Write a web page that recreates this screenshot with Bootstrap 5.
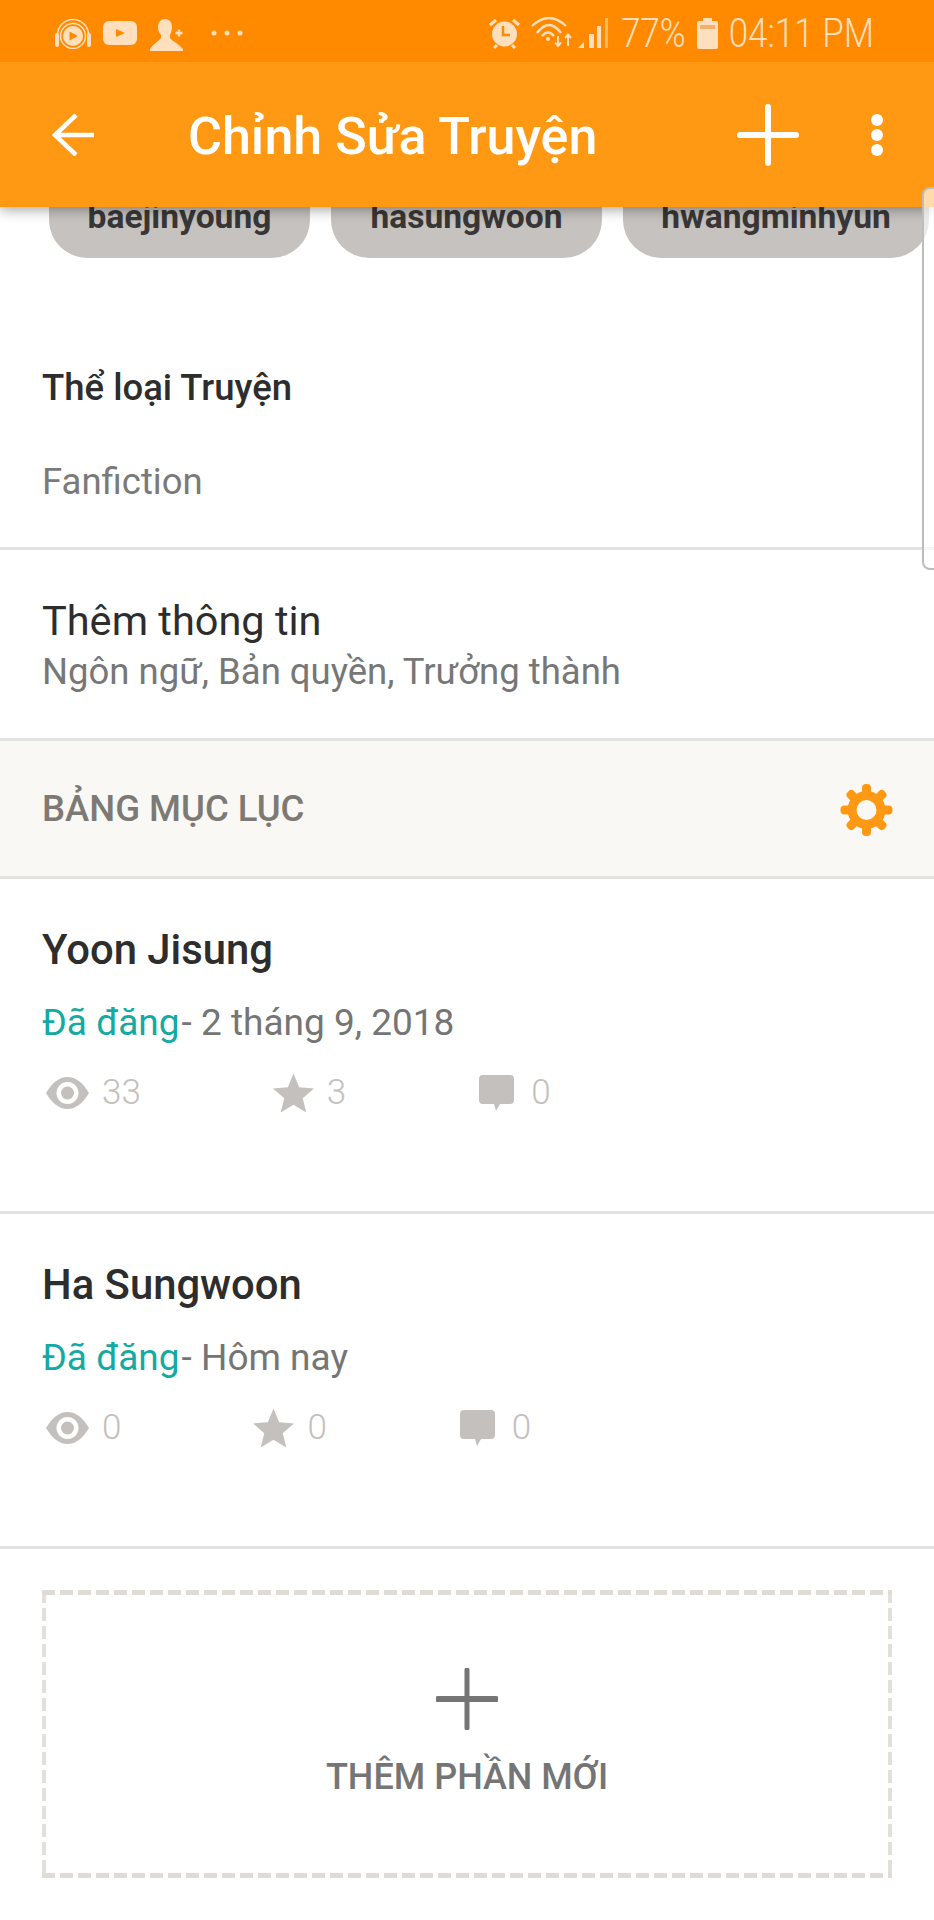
<!DOCTYPE html>
<html lang="vi">
<head>
    <meta charset="UTF-8">
    <meta name="viewport" content="width=device-width, initial-scale=1.0">
    <link href="https://cdn.jsdelivr.net/npm/bootstrap@5.3.2/dist/css/bootstrap.min.css" rel="stylesheet">
    <title>Chỉnh Sửa Truyện</title>
    <style>
        body { font-family: Roboto, "Liberation Sans", sans-serif; color: #222; background: #fff; }
        .phone { width: 934px; height: 1920px; overflow: hidden; position: relative; }
        .top-wrap { position: relative; z-index: 2; box-shadow: 0 3px 12px rgba(0,0,0,.35); }
        .status-bar { height: 62px; background: #ff8a00; color: #ffdfbd; padding: 4px 60px 0 55px; }
        .status-text { font-size: 35px; font-weight: 300; line-height: 1; transform: scaleY(1.15); }
        .gap-yt { margin-left: 12px; }
        .gap-person { margin-left: 13px; margin-top: 4px; }
        .gap-dots { margin-left: 27px; }
        .gap-wifi { margin-left: 11px; }
        .gap-signal { margin-left: 2px; }
        .gap-pct { margin-left: 13px; }
        .gap-batt { margin-left: 11px; }
        .app-bar { height: 145px; background: #ff9812; color: #fff; padding: 0 51px 0 52px; }
        .app-title { font-size: 52px; font-weight: 500; margin: 0 0 0 94px; padding-top: 5px; line-height: 1; }
        .gap-menu { margin-left: 72px; }
        .tag-row { margin-top: -40px; padding-left: 49px; gap: 21px; height: 91px; overflow: hidden; }
        .tag-pill { background: #c6c2bf; color: #383636; font-size: 33.600px; font-weight: 700; border-radius: 38px; height: 91px; line-height: 100px; text-align: center; flex: none; }
        .tag-a { width: 261px; }
        .tag-b { width: 271px; }
        .tag-c { width: 306px; }
        .genre-block { height: 292px; padding: 111px 42px 0; border-bottom: 3px solid #e3e3e1; }
        .genre-title { font-size: 36.500px; font-weight: 500; line-height: 38px; color: #2d2d2d; }
        .genre-value { font-size: 36.500px; line-height: 40px; color: #7a7a7a; margin-top: 55px; }
        .more-block { height: 191px; padding: 48px 42px 0; border-bottom: 3px solid #e3e3e1; }
        .more-title { font-size: 41.500px; line-height: 46px; color: #2d2d2d; }
        .more-sub { font-size: 36.500px; line-height: 40px; color: #777; margin-top: 8px; }
        .toc-head { height: 138px; background: #f9f8f4; border-bottom: 3px solid #e3e3e1; padding: 2px 41px 0 42px; }
        .toc-label { font-size: 36.500px; font-weight: 500; color: #7d7a75; }
        .part-row { height: 335px; padding: 47px 42px 0; border-bottom: 3px solid #e3e3e1; }
        .part-title { font-size: 41.800px; font-weight: 500; line-height: 48px; color: #2d2d2d; }
        .part-meta { font-size: 37px; line-height: 44px; color: #757575; margin-top: 27px; }
        .part-state { color: #14aaa4; margin-right: 2px; }
        .part-stats { margin-top: 26px; height: 44px; padding-left: 4px; gap: 132px; color: #c4c0bd; font-size: 35px; font-weight: 300; }
        .stat-cell { display: flex; align-items: center; gap: 13px; }
        .stat-talk { gap: 17px; margin-left: 1px; }
        .add-box {
            margin: 41px 42px 0; height: 288px; padding-bottom: 3px; color: #757575;
            background-image:
                repeating-linear-gradient(90deg, #dfdbd5 0 13px, transparent 13px 18px),
                repeating-linear-gradient(90deg, #dfdbd5 0 13px, transparent 13px 18px),
                repeating-linear-gradient(180deg, #e3e0da 0 13px, transparent 13px 18px),
                repeating-linear-gradient(180deg, #e3e0da 0 13px, transparent 13px 18px);
            background-size: 100% 5px, 100% 5px, 4px 100%, 4px 100%;
            background-position: 0 0, 0 100%, 0 0, 100% 0;
            background-repeat: no-repeat;
        }
        .add-label { font-size: 36px; font-weight: 500; margin-top: 27px; line-height: 40px; }
        .edge-handle { position: absolute; right: -8px; top: 187px; width: 20px; height: 383px; border: 2px solid #bdbdbd; border-radius: 8px; background: rgba(255,255,255,.65); z-index: 3; }
    </style>
</head>
<body>
<div class="phone">
    <div class="top-wrap">
        <div class="status-bar d-flex align-items-center justify-content-between">
            <div class="d-flex align-items-center">
                <svg width="36" height="31" viewBox="0 0 36 31" fill="none"><path d="M2.500 20V17a15.500 15.500 0 0 1 31 0v3" stroke="#ffdfbd" stroke-width="1.600"/><rect x="0" y="15" width="4" height="14" rx="2" fill="#ffdfbd"/><rect x="32" y="15" width="4" height="14" rx="2" fill="#ffdfbd"/><circle cx="18" cy="18" r="12.500" stroke="#ffdfbd" stroke-width="1.500"/><circle cx="18" cy="18" r="10" fill="#ffdfbd"/><path d="M14.500 13.500l8.500 4.500-8.500 4.500z" fill="#ff8a00"/></svg>
                <svg class="gap-yt" width="34" height="24" viewBox="0 0 34 24"><rect width="34" height="24" rx="6" fill="#ffdfbd"/><path d="M13 8l9 4-9 4z" fill="#ff8a00"/></svg>
                <svg class="gap-person" width="34" height="32" viewBox="0 0 34 32" fill="#ffdfbd"><path d="M15 0c4 0 7 3 7 8 0 3-1 6-2 8v3c2 3 8 5 13 11v2H0v-2c4-6 9-8 11-11v-3c-2-2-3-5-3-8 0-5 3-8 7-8z"/><path d="M25.500 14h7M29 10.500v7" stroke="#ffdfbd" stroke-width="2.500"/></svg>
                <svg class="gap-dots" width="32" height="6" viewBox="0 0 32 6"><circle cx="3" cy="3" r="2.500" fill="#ffdfbd"/><circle cx="16" cy="3" r="2.500" fill="#ffdfbd"/><circle cx="29" cy="3" r="2.500" fill="#ffdfbd"/></svg>
            </div>
            <div class="d-flex align-items-center">
                <svg width="31" height="31" viewBox="0 0 31 31"><circle cx="15.500" cy="16" r="12.500" fill="#ffdfbd"/><path d="M14 8v9h7" stroke="#ff8a00" stroke-width="2.500" fill="none"/><path d="M1 7l6-5M30 7l-6-5M5 30l3-3M26 30l-3-3" stroke="#ffdfbd" stroke-width="3"/></svg>
                <svg class="gap-wifi" width="45" height="32" viewBox="0 0 45 32" fill="none" stroke="#ffdfbd" stroke-width="2.400"><path d="M1 9Q18-7 35 9M6 16Q18 0 30 16M11 19Q17 12 23 19"/><circle cx="17" cy="22" r="2" fill="#ffdfbd" stroke="none"/><path d="M27 19v10M24 25.500l3 3.500 3-3.500M37 29V18M34 21l3-3.500 3 3.500" stroke-width="2"/></svg>
                <svg class="gap-signal" width="30" height="32" viewBox="0 0 30 32" fill="#ffdfbd"><path d="M0 31l6-6v6z"/><rect x="11" y="17" width="5" height="14"/><rect x="19" y="9" width="4" height="22"/><rect x="27" y="1" width="3" height="30" opacity=".55"/></svg>
                <span class="status-text gap-pct">77%</span>
                <svg class="gap-batt" width="21" height="31" viewBox="0 0 21 31"><path d="M6 0h9v3h4a2 2 0 0 1 2 2v24a2 2 0 0 1-2 2H2a2 2 0 0 1-2-2V5a2 2 0 0 1 2-2h4z" fill="#ffdfbd"/><rect x="3" y="7" width="15" height="4" fill="#f0b070"/></svg>
                <span class="status-text gap-batt">04:11 PM</span>
            </div>
        </div>
        <div class="app-bar d-flex align-items-center">
            <svg width="42" height="42" viewBox="0 0 42 42" fill="none" stroke="#fff" stroke-width="4.500"><path d="M42 21H3M24 1L3 21l21 20"/></svg>
            <h1 class="app-title">Chỉnh Sửa Truyện</h1>
            <svg class="ms-auto" width="62" height="62" viewBox="0 0 62 62" stroke="#fff" stroke-width="6" stroke-linecap="round"><path d="M31 3v56M3 31h56"/></svg>
            <svg class="gap-menu" width="12" height="42" viewBox="0 0 12 42" fill="#fff"><circle cx="6" cy="6" r="6"/><circle cx="6" cy="21" r="6"/><circle cx="6" cy="36" r="6"/></svg>
        </div>
    </div>

    <div class="edge-handle"></div>

    <div class="tag-row d-flex">
        <div class="tag-pill tag-a">baejinyoung</div>
        <div class="tag-pill tag-b">hasungwoon</div>
        <div class="tag-pill tag-c">hwangminhyun</div>
    </div>

    <div class="genre-block">
        <div class="genre-title">Thể loại Truyện</div>
        <div class="genre-value">Fanfiction</div>
    </div>

    <div class="more-block">
        <div class="more-title">Thêm thông tin</div>
        <div class="more-sub">Ngôn ngữ, Bản quyền, Trưởng thành</div>
    </div>

    <div class="toc-head d-flex align-items-center justify-content-between">
        <span class="toc-label">BẢNG MỤC LỤC</span>
        <svg width="53" height="52" viewBox="0 0 53 52"><g fill="#ff9812"><circle cx="26.500" cy="26" r="19"/><rect x="22" y="0" width="9" height="52" rx="4"/><rect x="22" y="0" width="9" height="52" rx="4" transform="rotate(45 26.500 26)"/><rect x="22" y="0" width="9" height="52" rx="4" transform="rotate(90 26.500 26)"/><rect x="22" y="0" width="9" height="52" rx="4" transform="rotate(135 26.500 26)"/></g><circle cx="26.500" cy="26" r="10" fill="#f9f8f4"/></svg>
    </div>

    <div class="part-row">
        <div class="part-title">Yoon Jisung</div>
        <div class="part-meta"><span class="part-state">Đã đăng</span>- 2 tháng 9, 2018</div>
        <div class="part-stats d-flex">
            <div class="stat-cell"><svg width="43" height="32" viewBox="0 0 43 32"><path d="M0 16C6 6 13 0 21.500 0S37 6 43 16c-6 10-13 16-21.500 16S6 26 0 16z" fill="#c4c0bd"/><circle cx="21.500" cy="16" r="11" fill="#fff"/><circle cx="21.500" cy="16" r="6.500" fill="#c4c0bd"/></svg><span>33</span></div>
            <div class="stat-cell"><svg width="41" height="40" viewBox="0 0 40 38"><path d="M20 0l5.500 13.500L40 14.500 29 24l3.500 14L20 30.500 7.500 38 11 24 0 14.500l14.500-1z" fill="#c4c0bd"/></svg><span>3</span></div>
            <div class="stat-cell stat-talk"><svg width="35" height="36" viewBox="0 0 35 36"><path d="M4 0h27a4 4 0 0 1 4 4v21a4 4 0 0 1-4 4H21l-4 7-2-7H4a4 4 0 0 1-4-4V4a4 4 0 0 1 4-4z" fill="#c4c0bd"/></svg><span>0</span></div>
        </div>
    </div>

    <div class="part-row">
        <div class="part-title">Ha Sungwoon</div>
        <div class="part-meta"><span class="part-state">Đã đăng</span>- Hôm nay</div>
        <div class="part-stats d-flex">
            <div class="stat-cell"><svg width="43" height="32" viewBox="0 0 43 32"><path d="M0 16C6 6 13 0 21.500 0S37 6 43 16c-6 10-13 16-21.500 16S6 26 0 16z" fill="#c4c0bd"/><circle cx="21.500" cy="16" r="11" fill="#fff"/><circle cx="21.500" cy="16" r="6.500" fill="#c4c0bd"/></svg><span>0</span></div>
            <div class="stat-cell"><svg width="41" height="40" viewBox="0 0 40 38"><path d="M20 0l5.500 13.500L40 14.500 29 24l3.500 14L20 30.500 7.500 38 11 24 0 14.500l14.500-1z" fill="#c4c0bd"/></svg><span>0</span></div>
            <div class="stat-cell stat-talk"><svg width="35" height="36" viewBox="0 0 35 36"><path d="M4 0h27a4 4 0 0 1 4 4v21a4 4 0 0 1-4 4H21l-4 7-2-7H4a4 4 0 0 1-4-4V4a4 4 0 0 1 4-4z" fill="#c4c0bd"/></svg><span>0</span></div>
        </div>
    </div>

    <div class="add-box d-flex flex-column align-items-center justify-content-center">
        <svg width="62" height="62" viewBox="0 0 62 62" stroke="#757575" stroke-linecap="round"><path d="M31 2v58" stroke-width="5"/><path d="M2 31h58" stroke-width="6"/></svg>
        <div class="add-label">THÊM PHẦN MỚI</div>
    </div>
</div>
<script src="https://cdn.jsdelivr.net/npm/bootstrap@5.3.2/dist/js/bootstrap.bundle.min.js"></script>
</body>
</html>
